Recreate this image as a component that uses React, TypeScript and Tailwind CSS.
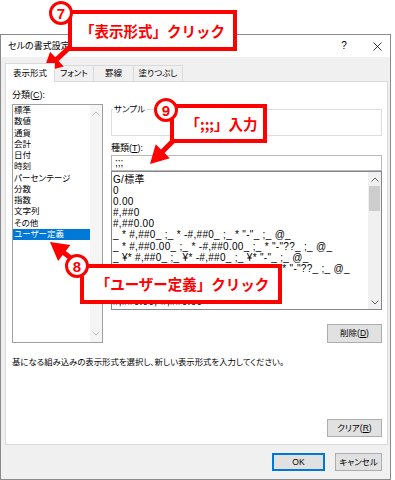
import React from "react";

const cats = ["標準", "数値", "通貨", "会計", "日付", "時刻", "パーセンテージ", "分数", "指数", "文字列", "その他", "ユーザー定義"];
const formats = [
  "G/標準",
  "0",
  "0.00",
  "#,##0",
  "#,##0.00",
  '_ * #,##0_ ;_ * -#,##0_ ;_ * "-"_ ;_ @_',
  '_ * #,##0.00_ ;_ * -#,##0.00_ ;_ * "-"??_ ;_ @_',
  '_ ¥* #,##0_ ;_ ¥* -#,##0_ ;_ ¥* "-"_ ;_ @_',
  '_ ¥* #,##0.00_ ;_ ¥* -#,##0.00_ ;_ ¥* "-"??_ ;_ @_',
  "#,##0;-#,##0",
  "#,##0;[赤]-#,##0",
  "#,##0.00;-#,##0.00",
];

function arrowPts(x1: number, y1: number, x2: number, y2: number, sw: number, hl: number, hw: number) {
  const dx = x2 - x1, dy = y2 - y1, L = Math.hypot(dx, dy);
  const ux = dx / L, uy = dy / L, nx = -uy, ny = ux;
  const bx = x2 - ux * hl, by = y2 - uy * hl;
  const p = (x: number, y: number) => `${x.toFixed(1)},${y.toFixed(1)}`;
  return [
    p(x1 + nx * sw, y1 + ny * sw),
    p(bx + nx * sw, by + ny * sw),
    p(bx + nx * hw, by + ny * hw),
    p(x2, y2),
    p(bx - nx * hw, by - ny * hw),
    p(bx - nx * sw, by - ny * sw),
    p(x1 - nx * sw, y1 - ny * sw),
  ].join(" ");
}

function Chevron({ up, color }: { up?: boolean; color: string }) {
  return (
    <svg width="8" height="5" viewBox="0 0 8 5">
      <path d={up ? "M0.5 4.5 L4 1 L7.5 4.5" : "M0.5 0.5 L4 4 L7.5 0.5"} fill="none" stroke={color} strokeWidth="1" />
    </svg>
  );
}

function Btn({ children, w, h, primary }: { children: React.ReactNode; w: string; h?: string; primary?: boolean }) {
  return (
    <div
      className={`${w} ${h ?? "h-[18px]"} flex items-center justify-center bg-[#e1e1e1] text-[8.5px] text-black ${
        primary ? "border-2 border-[#0078d7]" : "border border-[#adadad]"
      }`}
    >
      {children}
    </div>
  );
}

export default function App() {
  return (
    <div className="relative w-[395px] h-[480px] bg-white overflow-hidden font-['Liberation_Sans','Noto_Sans_CJK_JP',sans-serif] [font-feature-settings:'palt'] text-black">
      <div className="pt-[34px]">
        <div className="w-[391px] h-[446px] border border-[#8a8a8a] flex flex-col bg-[#f0f0f0]">
          {/* title bar */}
          <div className="h-[22px] bg-white flex items-center shrink-0">
            <div className="flex-1 pl-[7px] text-[9px] leading-[12px]">セルの書式設定</div>
            <div className="w-[30px] text-center text-[10px] leading-[12px]">?</div>
            <div className="ml-[5px] w-[26px] flex justify-center">
              <svg width="9" height="9" viewBox="0 0 9 9">
                <path d="M0.5 0.5 L8.5 8.5 M8.5 0.5 L0.5 8.5" stroke="#222" strokeWidth="0.9" />
              </svg>
            </div>
          </div>
          {/* tabs */}
          <div className="h-[24px] flex items-end pl-[4px] shrink-0 text-[8.5px]">
            <div className="relative z-10 -mb-px w-[50px] h-[19px] bg-white border-l border-t border-r border-[#d9d9d9] flex items-center justify-center">
              表示形式
            </div>
            <div className="w-[39px] h-[16px] border-t border-r border-[#d9d9d9] flex items-center justify-center">フォント</div>
            <div className="w-[40px] h-[16px] border-t border-r border-[#d9d9d9] flex items-center justify-center">罫線</div>
            <div className="w-[49px] h-[16px] border-t border-r border-[#d9d9d9] flex items-center justify-center">塗りつぶし</div>
          </div>
          {/* panel */}
          <div className="ml-[4px] w-[383px] h-[364px] shrink-0 bg-white border border-[#d9d9d9] pt-[7px] pl-[6px] pr-[5px] flex flex-col text-[8.5px]">
            <div className="flex gap-[8px]">
              {/* left column */}
              <div className="w-[91px] flex flex-col">
                <div className="h-[12px] leading-[12px] text-[9px]">
                  分類(<span className="underline">C</span>):
                </div>
                <div className="mt-[3px] h-[239px] border border-[#a0a0a0] flex">
                  <div className="flex-1 flex flex-col">
                    {cats.map((c, i) => (
                      <div
                        key={c}
                        className={`h-[11.25px] leading-[11.25px] pl-[1px] whitespace-nowrap ${
                          i === cats.length - 1 ? "bg-[#0078d7] text-white" : ""
                        }`}
                      >
                        {c}
                      </div>
                    ))}
                  </div>
                  <div className="w-[12px] bg-[#f5f5f5] flex flex-col items-center justify-between py-[6px]">
                    <Chevron up color="#bfbfbf" />
                    <Chevron color="#bfbfbf" />
                  </div>
                </div>
              </div>
              {/* right column */}
              <div className="mt-[15px] w-[271px] flex flex-col">
                <fieldset className="h-[32px] border border-[#dcdcdc] px-[1px]">
                  <legend className="px-[1px] text-[8.5px] leading-[10px]">サンプル</legend>
                </fieldset>
                <div className="mt-[6px] h-[12px] leading-[12px] text-[9px]">
                  種類(<span className="underline">T</span>):
                </div>
                <div className="mt-[1px] h-[16px] border border-[#b8b8b8] pl-[3px] flex items-center leading-[12px] text-[10px]">;;;</div>
                <div className="h-[139px] border border-[#828790] flex overflow-hidden">
                  <div className="flex-1 pt-[2px] pl-[1px] overflow-hidden text-[10px] tracking-[0.3px]">
                    {formats.map((f, i) => (
                      <div key={i} className="h-[11.1px] leading-[11.1px] whitespace-pre">
                        {f}
                      </div>
                    ))}
                  </div>
                  <div className="w-[13px] bg-[#f0f0f0] flex flex-col items-center">
                    <div className="h-[14px] flex items-center">
                      <Chevron up color="#606060" />
                    </div>
                    <div className="w-[11px] h-[25px] bg-[#cdcdcd]" />
                    <div className="flex-1" />
                    <div className="h-[14px] flex items-center">
                      <Chevron color="#606060" />
                    </div>
                  </div>
                </div>
                <div className="mt-[14px] self-end">
                  <Btn w="w-[55px]" h="h-[19px]">
                    削除(<span className="underline">D</span>)
                  </Btn>
                </div>
              </div>
            </div>
            <div className="mt-[13px] h-[12px] leading-[12px] whitespace-nowrap text-[8.4px]">
              基になる組み込みの表示形式を選択し、新しい表示形式を入力してください。
            </div>
            <div className="mt-[51px] self-end">
              <Btn w="w-[55px]">
                クリア(<span className="underline">R</span>)
              </Btn>
            </div>
          </div>
          {/* footer */}
          <div className="flex-1 flex justify-end items-start pt-[8px] pr-[8px] gap-[10px]">
            <Btn w="w-[53px]" primary>
              OK
            </Btn>
            <Btn w="w-[47px]">キャンセル</Btn>
          </div>
        </div>
      </div>

      {/* annotations */}
      <svg className="absolute left-0 top-0 pointer-events-none" width="395" height="480" viewBox="0 0 395 480">
        <polygon points={arrowPts(70, 47, 43, 72, 2.5, 19, 10)} fill="#ff0000" />
        <polygon points={arrowPts(173, 141, 150, 164, 2.5, 18, 10)} fill="#ff0000" />
        <polygon points={arrowPts(72, 259, 50, 242, 2.5, 18, 10)} fill="#ff0000" />
      </svg>

      <div className="absolute left-[68px] top-[10px] w-[169px] h-[41px] border-4 border-[#ff0000] bg-white flex items-center justify-center text-[#ff0000] font-bold text-[14.5px] font-['Noto_Sans_CJK_JP',sans-serif] [font-feature-settings:normal] whitespace-nowrap">
        「表示形式」クリック
      </div>
      <div className="absolute left-[170px] top-[104px] w-[97px] h-[39px] border-4 border-[#ff0000] bg-white flex items-center justify-center pl-[6px] text-[#ff0000] font-bold text-[14.5px] font-['Noto_Sans_CJK_JP',sans-serif] [font-feature-settings:normal] whitespace-nowrap">
        「;;;」入力
      </div>
      <div className="absolute left-[80px] top-[264px] w-[202px] h-[40px] border-4 border-[#ff0000] bg-white flex items-center justify-center pl-[3px] text-[#ff0000] font-bold text-[14.5px] font-['Noto_Sans_CJK_JP',sans-serif] [font-feature-settings:normal] whitespace-nowrap">
        「ユーザー定義」クリック
      </div>

      <div className="absolute left-[49px] top-[1px] w-[24px] h-[24px] rounded-full border-[3px] border-[#ff0000] bg-white flex items-center justify-center text-[#ff0000] font-bold text-[15px] leading-none">
        7
      </div>
      <div className="absolute left-[154px] top-[98px] w-[24px] h-[24px] rounded-full border-[3px] border-[#ff0000] bg-white flex items-center justify-center text-[#ff0000] font-bold text-[15px] leading-none">
        9
      </div>
      <div className="absolute left-[65px] top-[254px] w-[24px] h-[24px] rounded-full border-[3px] border-[#ff0000] bg-white flex items-center justify-center text-[#ff0000] font-bold text-[15px] leading-none">
        8
      </div>
    </div>
  );
}
